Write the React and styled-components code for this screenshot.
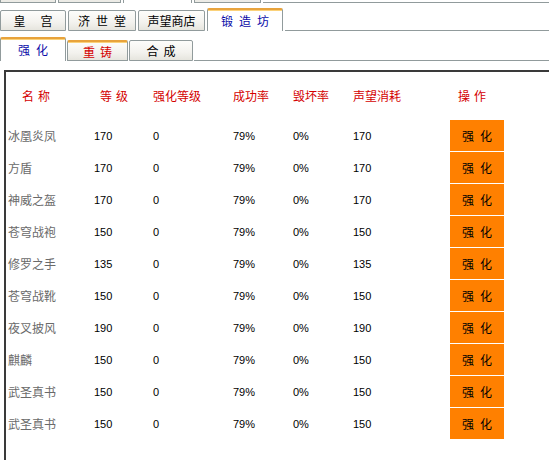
import React from 'react'
import styled, { createGlobalStyle } from 'styled-components'

const GlobalStyle = createGlobalStyle`
  html, body {
    margin: 0;
    padding: 0;
    background: #fff;
    overflow: hidden;
  }
  body {
    font-family: "Noto Sans CJK SC", "Liberation Sans", sans-serif;
    font-size: 12px;
  }
`

const TAB_BORDER = '#919b9c'

const Page = styled.div`
  width: 549px;
  height: 460px;
  display: flex;
  flex-direction: column;
`

const TopStrip = styled.div`
  display: flex;
  height: 3px;
`

const Stub = styled.div`
  box-sizing: border-box;
  width: ${(p) => p.$w}px;
  margin-right: 2px;
  border: 1px solid ${TAB_BORDER};
  border-top: none;
  border-bottom: ${(p) => (p.$active ? 'none' : `1px solid ${TAB_BORDER}`)};
  background: ${(p) => (p.$active ? '#fff' : '#ecebe6')};
`

const TabBar = styled.div`
  display: flex;
  align-items: flex-end;
  margin-top: ${(p) => p.$top}px;
  height: ${(p) => p.$h}px;
`

const Tab = styled.div`
  box-sizing: border-box;
  width: ${(p) => p.$w}px;
  margin-right: ${(p) => p.$gap}px;
  height: ${(p) => (p.$active ? p.$h + 2 : p.$h)}px;
  display: flex;
  align-items: center;
  justify-content: center;
  white-space: nowrap;
  font-size: 12px;
  line-height: 14px;
  color: ${(p) => p.$color};
  border: 1px solid ${TAB_BORDER};
  border-radius: 2px 2px 0 0;
  border-bottom: ${(p) => (p.$active ? 'none' : `1px solid ${TAB_BORDER}`)};
  border-top: ${(p) => (p.$hot ? '2px solid #e8a33c' : `1px solid ${TAB_BORDER}`)};
  box-shadow: ${(p) => (p.$hot ? 'inset 0 1px 0 #fbd27a' : 'none')};
  background: ${(p) =>
    p.$active ? '#fff' : 'linear-gradient(#fdfdfb, #f3f2ee 60%, #e6e5de)'};
  padding-top: ${(p) => (p.$active ? 0 : 1)}px;
`

const TabLabel = styled.span`
  letter-spacing: ${(p) => p.$ls}px;
  margin-right: -${(p) => p.$ls}px;
`

const Filler = styled.div`
  flex: 1;
  border-bottom: 1px solid ${TAB_BORDER};
`

const Panel = styled.div`
  margin: 9px 0 0 4px;
  flex: 1;
  border-top: 2px solid #3a3a3a;
  border-left: 2px solid #3a3a3a;
  padding-left: 2px;
`

const Grid = styled.div`
  display: grid;
  grid-template-columns: 86px 59px 80px 60px 60px 97px 60px;
`

const HeadCell = styled.div`
  height: 47px;
  display: flex;
  align-items: center;
  padding-left: ${(p) => p.$pl || 0}px;
  color: #d40000;
  font-size: 12px;
  white-space: pre;
`

const Gap = styled.span`
  display: inline-block;
  width: 4px;
`

const Cell = styled.div`
  height: 32px;
  display: flex;
  align-items: center;
  padding-top: 1px;
  box-sizing: border-box;
  color: ${(p) => (p.$name ? '#6a6a6a' : '#000')};
  font-family: ${(p) =>
    p.$name ? '"Noto Sans CJK SC", sans-serif' : '"Liberation Sans", Arial, sans-serif'};
  font-size: ${(p) => (p.$name ? 12 : 11)}px;
`

const ActionCell = styled.div`
  height: 32px;
  padding-top: 1px;
  box-sizing: border-box;
`

const ForgeButton = styled.button`
  width: 54px;
  height: 31px;
  border: none;
  margin: 0;
  padding: 0 0 0 6px;
  background: #ff8000;
  color: #000;
  font-family: "Noto Sans CJK SC", sans-serif;
  font-size: 12px;
  letter-spacing: 6px;
  cursor: pointer;
`

const mainTabs = [
  { label: '皇宫', w: 66, ls: 15 },
  { label: '济世堂', w: 68, ls: 6 },
  { label: '声望商店', w: 67, ls: 0 },
  { label: '锻造坊', w: 76, ls: 6, active: true },
]

const subTabs = [
  { label: '强化', w: 66, ls: 6, active: true, color: '#0a0aa8' },
  { label: '重铸', w: 61, ls: 5, hot: true, color: '#d40000' },
  { label: '合成', w: 64, ls: 5, color: '#000' },
]

const headers = [
  { t: ['名', '称'], pl: 14 },
  { t: ['等', '级'], pl: 6 },
  { t: ['强化等级'] },
  { t: ['成功率'] },
  { t: ['毁坏率'] },
  { t: ['声望消耗'] },
  { t: ['操', '作'], pl: 8 },
]

const items = [
  ['冰凰炎凤', 170, 0, '79%', '0%', 170],
  ['方盾', 170, 0, '79%', '0%', 170],
  ['神威之盔', 170, 0, '79%', '0%', 170],
  ['苍穹战袍', 150, 0, '79%', '0%', 150],
  ['修罗之手', 135, 0, '79%', '0%', 135],
  ['苍穹战靴', 150, 0, '79%', '0%', 150],
  ['夜叉披风', 190, 0, '79%', '0%', 190],
  ['麒麟', 150, 0, '79%', '0%', 150],
  ['武圣真书', 150, 0, '79%', '0%', 150],
  ['武圣真书', 150, 0, '79%', '0%', 150],
]

export default function App() {
  return (
    <Page>
      <GlobalStyle />
      <TopStrip>
        <Stub $w={56} />
        <Stub $w={63} />
        <Stub $w={69} $active />
        <Stub $w={67} />
        <Filler />
      </TopStrip>

      <TabBar $top={5} $h={23}>
        {mainTabs.map((t) => (
          <Tab
            key={t.label}
            $w={t.w}
            $gap={2}
            $h={21}
            $active={t.active}
            $hot={t.active}
            $color={t.active ? '#0a0aa8' : '#000'}
          >
            <TabLabel $ls={t.ls}>{t.label}</TabLabel>
          </Tab>
        ))}
        <Filler />
      </TabBar>

      <TabBar $top={6} $h={24}>
        {subTabs.map((t) => (
          <Tab
            key={t.label}
            $w={t.w}
            $gap={1}
            $h={t.active ? 22 : 21}
            $active={t.active}
            $hot={t.active || t.hot}
            $color={t.color}
          >
            <TabLabel $ls={t.ls}>{t.label}</TabLabel>
          </Tab>
        ))}
        <Filler />
      </TabBar>

      <Panel>
        <Grid>
          {headers.map((h) => (
            <HeadCell key={h.t.join('')} $pl={h.pl}>
              {h.t[0]}
              {h.t[1] && (
                <>
                  <Gap />
                  {h.t[1]}
                </>
              )}
            </HeadCell>
          ))}
          {items.map((row, i) => (
            <React.Fragment key={i}>
              <Cell $name>{row[0]}</Cell>
              {row.slice(1).map((v, j) => (
                <Cell key={j}>{v}</Cell>
              ))}
              <ActionCell>
                <ForgeButton>强化</ForgeButton>
              </ActionCell>
            </React.Fragment>
          ))}
        </Grid>
      </Panel>
    </Page>
  )
}
